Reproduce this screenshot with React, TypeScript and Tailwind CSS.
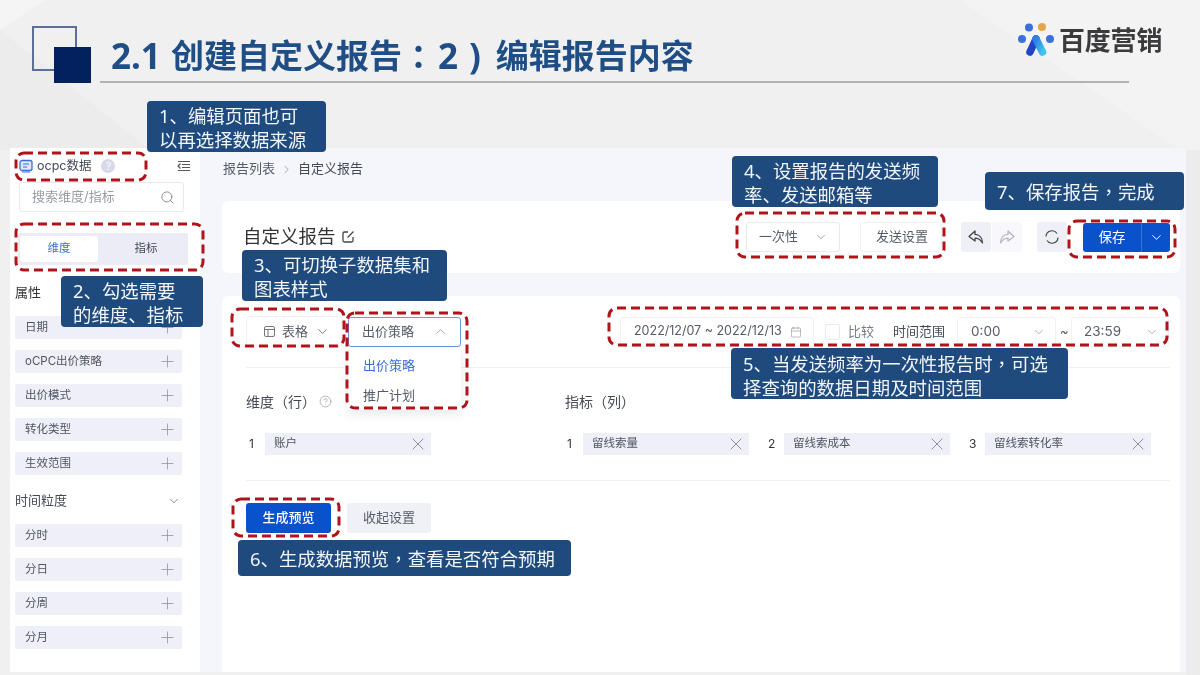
import { CircleHelp, Search, Plus, X, ChevronDown, ChevronUp, Calendar } from "lucide-react";

const callout = "absolute bg-[#1f4a7d] rounded-[4px] text-[#f2f5f9] text-[18.4px] leading-[24px] font-['Noto_Sans','Noto_Sans_CJK_SC',sans-serif] pl-[12px] whitespace-nowrap";

function Punct({ c }: { c: string }) {
  return <span className="font-['Noto_Sans_CJK_TC',sans-serif]">{c}</span>;
}

function DashBox({ x, y, w, h }: { x: number; y: number; w: number; h: number }) {
  return (
    <svg className="absolute" style={{ left: x - 2, top: y - 2 }} width={w + 4} height={h + 4} viewBox={`0 0 ${w + 4} ${h + 4}`} fill="none">
      <rect x="2" y="2" width={w} height={h} rx="8" stroke="#b0141b" strokeWidth="3" strokeDasharray="9 5" />
    </svg>
  );
}

function SideRow({ label }: { label: string }) {
  return (
    <div className="w-[167px] h-[23px] bg-[#eeeff7] rounded-[2px] flex items-center justify-between pl-[10px] pr-[5px] text-[11.5px] text-[#4f5560]">
      <span>{label}</span>
      <Plus size={19} strokeWidth={1} className="text-[#8e929c]" />
    </div>
  );
}

function Chip({ n, label }: { n: string; label: string }) {
  return (
    <div className="flex items-center h-[22px]">
      <span className="w-[16px] text-[12px] text-[#333]">{n}</span>
      <div className="w-[166px] h-[22px] bg-[#eeeff7] flex items-center justify-between pl-[9px] pr-[3px] text-[11.5px] text-[#4f5560]">
        <span>{label}</span>
        <X size={20} strokeWidth={1} className="text-[#7c808a]" />
      </div>
    </div>
  );
}

function Logo() {
  return (
    <svg width="40" height="36" viewBox="0 0 40 36">
      <defs>
        <linearGradient id="lg" x1="0" y1="0" x2="1" y2="1">
          <stop offset="0" stopColor="#2f7de0" />
          <stop offset="1" stopColor="#3fc4f2" />
        </linearGradient>
      </defs>
      <circle cx="12" cy="5.5" r="4" fill="#3b6fe0" />
      <circle cx="25" cy="5" r="4" fill="#e5a64a" />
      <circle cx="5" cy="17" r="4" fill="#3b6fe0" />
      <circle cx="33" cy="17" r="4" fill="#3b6fe0" />
      <path d="M19 17 L13 30" stroke="#1f45c4" strokeWidth="7.5" strokeLinecap="round" />
      <path d="M19 17 L25.5 30" stroke="url(#lg)" strokeWidth="7.5" strokeLinecap="round" />
    </svg>
  );
}

export default function App() {
  return (
    <div className="relative w-[1200px] h-[675px] overflow-hidden bg-[#f0f0f1] flex flex-col blur-[0.6px] font-['Inter','Noto_Sans_CJK_SC',sans-serif]">
      <svg className="absolute inset-0" width="1200" height="675" viewBox="0 0 1200 675">
        <polygon points="0,30 45,0 0,0" fill="#f5f5f5" />
        <polygon points="0,30 150,150 0,150" fill="#ececed" />
        <polygon points="960,0 1200,0 1200,150 1180,150" fill="#f3f3f3" />
        <polygon points="1186,150 1200,150 1200,675 1186,675" fill="#ececed" />
      </svg>

      {/* slide header */}
      <header className="relative h-[148px] shrink-0 font-['Noto_Sans','Noto_Sans_CJK_SC',sans-serif]">
        <div className="flex pl-[32px] pt-[26px]">
          <div className="relative w-[59px] h-[57px]">
            <div className="w-[45px] h-[45px] border-2 border-[#5c6f96]" />
            <div className="absolute left-[22px] top-[21px] w-[37px] h-[36px] bg-[#04215f]" />
          </div>
          <div className="ml-[9px] w-[1038px]">
            <div className="h-[55px] flex items-center pl-[11px] text-[33px] leading-none font-bold text-[#1f4e85] whitespace-nowrap pt-[4px]">
              <span className="text-[35px]">2.1</span>
              <span className="ml-[10px]">创建自定义报告</span>
              <Punct c="：" />
              <span className="text-[35px] ml-[3px]">2</span>
              <span className="text-[35px] ml-[11px] mr-[15px]">)</span>
              <span>编辑报告内容</span>
            </div>
            <div className="h-[2px] bg-[#b2b2b2] w-[1029px]" />
          </div>
        </div>
        <div className="absolute left-[1017px] top-[22px] flex items-center gap-[2px]">
          <Logo />
          <span className="text-[26px] leading-none font-semibold text-[#3b3b3d] tracking-[-0.2px]">百度营销</span>
        </div>
      </header>

      {/* embedded app */}
      <div className="relative ml-[10px] w-[1176px] h-[524px] flex bg-[#f5f6fb]">
        <aside className="w-[190px] shrink-0 bg-white pl-[5px] flex flex-col">
          <div className="h-[34px] pt-[2px] flex items-center pl-[4px] pr-[9px] text-[12.5px] text-[#444a55]">
            <svg width="14" height="14" viewBox="0 0 14 14" className="mr-[4px]">
              <rect x="1" y="1.5" width="12" height="10" rx="2" fill="#dbe7fb" stroke="#3a6fd8" strokeWidth="1.3" />
              <path d="M4 5h6M4 8h4" stroke="#3a6fd8" strokeWidth="1.1" />
              <path d="M3 13h8" stroke="#3a6fd8" strokeWidth="1" />
            </svg>
            <span>ocpc数据</span>
            <span className="ml-[10px] w-[14px] h-[14px] rounded-full bg-[#d5d9e8] text-white text-[10px] flex items-center justify-center">?</span>
            <svg width="14" height="12" viewBox="0 0 14 12" className="ml-auto" fill="none" stroke="#555" strokeWidth="1.2">
              <path d="M1 1.5h12M5 4.5h8M5 7.5h8M1 10.5h12" />
              <path d="M3.5 3.5L1 6l2.5 2.5" />
            </svg>
          </div>
          <div className="ml-[4px] w-[165px] h-[30px] border border-[#e8e9f0] rounded-[3px] flex items-center justify-between pl-[12px] pr-[8px] text-[13px] text-[#9a9da6]">
            <span>搜索维度/指标</span>
            <Search size={15} strokeWidth={1.3} className="text-[#777]" />
          </div>
          <div className="mt-[21px] ml-[3px] w-[170px] h-[32px] bg-[#ebecf5] rounded-[2px] flex items-center pl-[2px] text-[11.5px]">
            <div className="w-[78px] h-[26px] bg-white rounded-[3px] flex items-center justify-center text-[#3a6fd8]">维度</div>
            <div className="flex-1 pl-[6px] text-center text-[#444a55]">指标</div>
          </div>
          <div className="mt-[18px] h-[20px] flex items-center text-[13px] text-[#333]">属性</div>
          <div className="mt-[13px] flex flex-col gap-[11px]">
            {["日期", "oCPC出价策略", "出价模式", "转化类型", "生效范围"].map((l) => (
              <SideRow key={l} label={l} />
            ))}
          </div>
          <div className="mt-[16px] w-[167px] h-[20px] flex items-center justify-between pr-[1px] text-[13px] text-[#444a55]">
            <span>时间粒度</span>
            <ChevronDown size={14} strokeWidth={1.3} className="text-[#666]" />
          </div>
          <div className="mt-[13px] flex flex-col gap-[11px]">
            {["分时", "分日", "分周", "分月"].map((l) => (
              <SideRow key={l} label={l} />
            ))}
          </div>
        </aside>

        <main className="flex-1 pl-[22px] pr-[6px] flex flex-col">
          <div className="h-[42px] flex items-center pl-[1px] text-[13px] text-[#555b66] gap-[5px]">
            <span>报告列表</span>
            <ChevronDown size={13} strokeWidth={1.3} className="-rotate-90 text-[#888]" />
            <span className="text-[#444a55]">自定义报告</span>
          </div>
          <div className="mt-[11px] h-[72px] bg-white rounded-[6px] flex items-center pl-[21px] pr-[10px]">
            <span className="text-[18.5px] text-[#333]">自定义报告</span>
            <svg width="14" height="14" viewBox="0 0 14 14" fill="none" stroke="#444" strokeWidth="1.3" className="ml-[5px]">
              <path d="M7 2H3.5A1.5 1.5 0 0 0 2 3.5v7A1.5 1.5 0 0 0 3.5 12h7a1.5 1.5 0 0 0 1.5-1.5V7" />
              <path d="M6.5 7.5L12.5 1.5" />
            </svg>
            <div className="ml-auto w-[94px] h-[30px] border border-[#e9eaf1] rounded-[3px] flex items-center justify-between pl-[12px] pr-[11px] text-[13px] text-[#555b66]">
              <span>一次性</span>
              <ChevronDown size={14} strokeWidth={1.2} className="text-[#888]" />
            </div>
            <div className="ml-[20px] w-[82px] h-[30px] border border-[#f0f1f6] rounded-[3px] flex items-center justify-center pl-[2px] text-[13px] text-[#555b66]">发送设置</div>
            <div className="ml-[19px] w-[30px] h-[30px] bg-[#eeeff7] rounded-[3px] flex items-center justify-center">
              <svg width="16" height="14" viewBox="0 0 16 14" fill="none" stroke="#444" strokeWidth="1.3" strokeLinejoin="round">
                <path d="M7 1L1 6.5L7 11V8.2C10 8.2 12.5 9.8 14.5 13C14.5 8 11.5 4.6 7 4.4Z" />
              </svg>
            </div>
            <div className="ml-[1px] w-[30px] h-[30px] bg-[#f8f8fc] rounded-[3px] flex items-center justify-center">
              <svg width="16" height="14" viewBox="0 0 16 14" fill="none" stroke="#b4b7c0" strokeWidth="1.3" strokeLinejoin="round">
                <path d="M9 1L15 6.5L9 11V8.2C6 8.2 3.5 9.8 1.5 13C1.5 8 4.5 4.6 9 4.4Z" />
              </svg>
            </div>
            <div className="ml-[15px] w-[30px] h-[30px] bg-[#eeeff7] rounded-[3px] flex items-center justify-center">
              <svg width="16" height="16" viewBox="0 0 16 16" fill="none" stroke="#444" strokeWidth="1.2">
                <path d="M2 7.5A6 6 0 0 1 13 4.5" />
                <path d="M14 8.5A6 6 0 0 1 3 11.5" />
              </svg>
            </div>
            <div className="ml-[16px] w-[87px] h-[29px] bg-[#0a52cc] rounded-[3px] flex items-center text-white text-[13.5px]">
              <span className="w-[58px] text-center">保存</span>
              <div className="flex-1 h-full border-l border-[#3a72d8] flex items-center justify-center">
                <ChevronDown size={15} strokeWidth={1.6} />
              </div>
            </div>
          </div>

          <div className="mt-[23px] flex-1 bg-white rounded-t-[6px] pl-[24px] pr-[10px] pt-[20px]">
            <div className="flex items-center h-[31px] text-[13px] text-[#555b66]">
              <div className="w-[96px] h-[31px] border border-[#f0f1f6] rounded-[3px] flex items-center pl-[16px] pr-[11px]">
                <svg width="13" height="13" viewBox="0 0 13 13" fill="none" stroke="#777" strokeWidth="1" className="mr-[6px]">
                  <rect x="1.5" y="1.5" width="10" height="10" rx="1.5" />
                  <path d="M1.5 4.5h10M5 4.5v7" />
                </svg>
                <span>表格</span>
                <ChevronDown size={15} strokeWidth={1.3} className="ml-auto text-[#555]" />
              </div>
              <div className="relative ml-[6px] w-[113px] h-[30px] border border-[#6f96e3] rounded-[3px] flex items-center justify-between pl-[13px] pr-[12px]">
                <span>出价策略</span>
                <ChevronUp size={15} strokeWidth={1.2} className="text-[#888]" />
                <div className="absolute left-[-1px] top-[29px] w-[113px] h-[63px] bg-white shadow-[0_4px_10px_rgba(60,70,110,0.12)] flex flex-col pl-[15px] pt-[8px] gap-[10px] leading-[20px]">
                  <span className="text-[#3a6fd8]">出价策略</span>
                  <span>推广计划</span>
                </div>
              </div>
              <div className="ml-[159px] w-[194px] h-[30px] border border-[#f0f1f6] rounded-[3px] flex items-center pl-[13px] pr-[11px] text-[12.5px] whitespace-nowrap justify-between">
                <span>2022/12/07 ~ 2022/12/13</span>
                <Calendar size={12} strokeWidth={1.1} className="text-[#888]" />
              </div>
              <div className="ml-[11px] w-[15px] h-[16px] border border-[#e9eaf1] rounded-[2px]" />
              <span className="ml-[8px] text-[#777c86]">比较</span>
              <span className="ml-[19px] text-[#444a55]">时间范围</span>
              <div className="ml-[12px] w-[99px] h-[30px] border border-[#f0f1f6] rounded-[3px] flex items-center justify-between pl-[13px] pr-[9px] text-[13.5px]">
                <span>0:00</span>
                <ChevronDown size={14} strokeWidth={1.1} className="text-[#888]" />
              </div>
              <span className="ml-[4px] w-[11px]">~</span>
              <div className="w-[98px] h-[30px] border border-[#f0f1f6] rounded-[3px] flex items-center justify-between pl-[12px] pr-[9px] text-[13.5px]">
                <span>23:59</span>
                <ChevronDown size={14} strokeWidth={1.1} className="text-[#888]" />
              </div>
            </div>

            <div className="mt-[20px] h-px bg-[#eff0f6]" />

            <div className="mt-[23px] h-[20px] flex items-center text-[14px] text-[#444a55]">
              <div className="w-[319px] flex items-center">
                <span>维度（行）</span>
                <CircleHelp size={13} strokeWidth={1.1} className="ml-[3px] text-[#888]" />
              </div>
              <span>指标（列）</span>
            </div>

            <div className="mt-[22px] flex items-center pl-[3px]">
              <Chip n="1" label="账户" />
              <div className="ml-[136px] flex items-center gap-[19px]">
                <Chip n="1" label="留线索量" />
                <Chip n="2" label="留线索成本" />
                <Chip n="3" label="留线索转化率" />
              </div>
            </div>

            <div className="mt-[25px] h-px bg-[#eff0f6]" />

            <div className="mt-[22px] flex items-center gap-[16px] text-[13px]">
              <div className="w-[85px] h-[30px] bg-[#0a52cc] rounded-[3px] text-white font-medium flex items-center justify-center">生成预览</div>
              <div className="w-[84px] h-[30px] bg-[#f0f1f7] rounded-[3px] text-[#555b66] flex items-center justify-center">收起设置</div>
            </div>
          </div>
        </main>
      </div>

      {/* annotations over the screenshot */}
      <DashBox x={16} y={153} w={130} h={27} />
      <DashBox x={16} y={224} w={187} h={46} />
      <DashBox x={232} y={309} w={112} h={37} />
      <DashBox x={347} y={313} w={120} h={95} />
      <DashBox x={737} y={213} w={207} h={44} />
      <DashBox x={609} y={308} w={558} h={37} />
      <DashBox x={1069} y={221} w={106} h={36} />
      <DashBox x={233} y={499} w={106} h={37} />

      <div className={`${callout} pt-[3px] left-[147px] top-[101px] w-[179px] h-[51px]`}>1、编辑页面也可<br />以再选择数据来源</div>
      <div className={`${callout} pt-[3px] left-[61px] top-[276px] w-[142px] h-[51px]`}>2、勾选需要<br />的维度、指标</div>
      <div className={`${callout} pt-[3px] left-[242px] top-[250px] w-[205px] h-[51px]`}>3、可切换子数据集和<br />图表样式</div>
      <div className={`${callout} pt-[3px] left-[732px] top-[156px] w-[206px] h-[51px]`}>4、设置报告的发送频<br />率、发送邮箱等</div>
      <div className={`${callout} pt-[3px] left-[731px] top-[348px] w-[337px] h-[51px]`}>5、当发送频率为一次性报告时<Punct c="，" />可选<br />择查询的数据日期及时间范围</div>
      <div className={`${callout} left-[238px] top-[540px] w-[333px] h-[36px] flex items-center`}><span>6、生成数据预览<Punct c="，" />查看是否符合预期</span></div>
      <div className={`${callout} left-[985px] top-[172px] w-[199px] h-[38px] flex items-center`}><span>7、保存报告<Punct c="，" />完成</span></div>
    </div>
  );
}
